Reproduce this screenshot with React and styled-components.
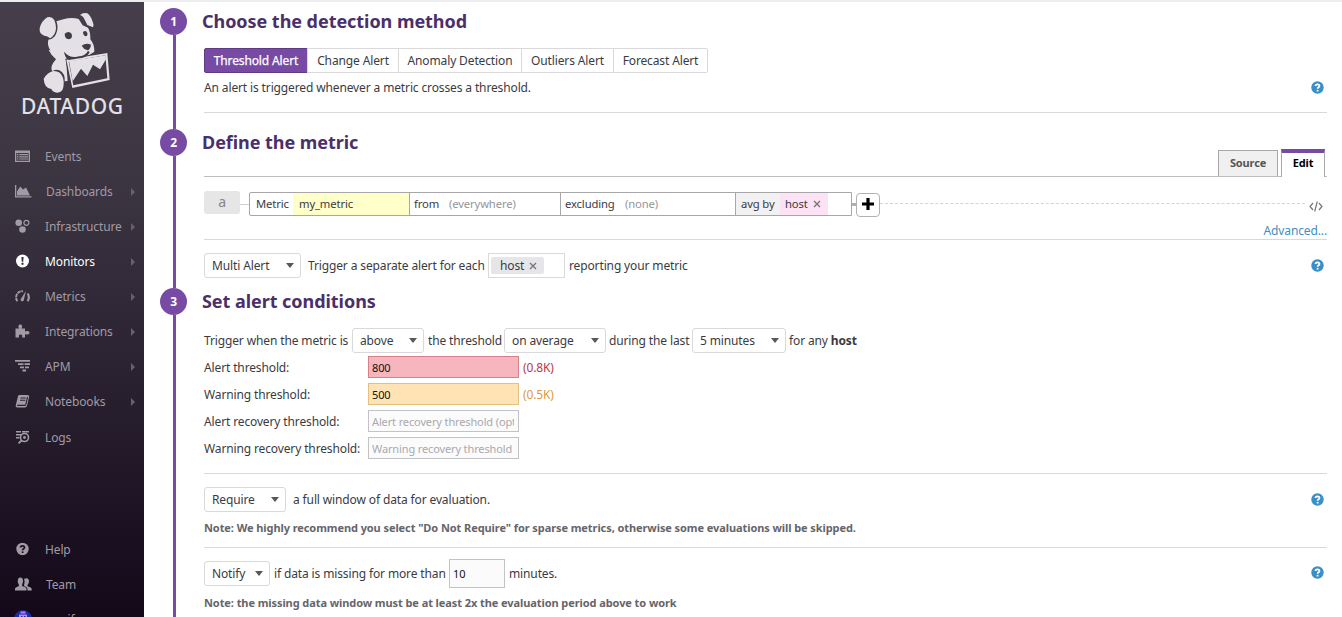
import React from "react";
import styled, { createGlobalStyle } from "styled-components";

const Global = createGlobalStyle`
  * { box-sizing: border-box; }
  body { margin: 0; background: #fff; }
  body, input, button { font-family: "Noto Sans", "Open Sans", sans-serif; font-size: 12px; color: #3b3b3f; letter-spacing: -0.13px; }
`;

const Page = styled.div`
  display: flex;
  height: 617px;
  overflow: hidden;
  border-top: 2px solid #b4b4b6;
  border-image: linear-gradient(#eeeef0 50%, #a9a8ab 50%) 2;
  border-left: 0; border-right: 0; border-bottom: 0;
`;

/* ---------- sidebar ---------- */
const Sidebar = styled.nav`
  flex: none;
  width: 144px;
  height: 615px;
  background: linear-gradient(#463f4b 0%, #3b3441 30%, #2a2231 60%, #1c1122 85%, #140919 100%);
`;
const Brand = styled.div`
  height: 137px;
  padding: 8px 0 0 21px;
  svg { display: block; margin-left: 14px; }
`;
const Wordmark = styled.div`
  margin-top: -4px;
  font: 500 21px/28px "Noto Sans", sans-serif;
  color: #e3e0e6;
  letter-spacing: 0.6px;
  white-space: nowrap;
`;
const NavItem = styled.a`
  display: flex;
  align-items: center;
  height: 35px;
  margin-top: ${(p) => p.$gap || 0}px;
  padding: 0 9px 0 14px;
  color: ${(p) => (p.$active ? "#fff" : "#a09ba5")};
  svg { flex: none; display: block; margin-bottom: 1px; }
`;
const NavLabel = styled.span`
  flex: 1;
  margin-left: 14px;
  white-space: nowrap;
`;
const Chevron = styled.i`
  border: 4px solid transparent;
  border-left-color: #68616d;
  border-right: 0;
`;

/* ---------- main column ---------- */
const Main = styled.main`
  flex: 1;
  padding: 6px 15px 0 16px;
`;
const Section = styled.section`
  display: flex;
  height: ${(p) => p.$h}px;
`;
const Rail = styled.div`
  flex: none;
  width: 27px;
  margin-right: 17px;
  display: flex;
  flex-direction: column;
  align-items: center;
  &::after { content: ""; flex: 1; width: 3px; margin-left: 2px; background: #774aa4; }
`;
const Step = styled.div`
  width: 27px;
  height: 27px;
  border-radius: 50%;
  background: #774aa4;
  color: #fff;
  font-weight: 700;
  line-height: 27px;
  text-align: center;
`;
const Body = styled.div`
  flex: 1;
  min-width: 0;
`;
const Heading = styled.h2`
  margin: 0 0 0 -2px;
  font-size: 18px;
  line-height: 26px;
  height: 27px;
  font-weight: 700;
  color: #4a2f6b;
  letter-spacing: -0.05px;
  white-space: nowrap;
`;
const Row = styled.div`
  display: flex;
  align-items: center;
  height: ${(p) => p.$h}px;
  margin-top: ${(p) => p.$top || 0}px;
`;
const Rule = styled.hr`
  height: 1px;
  border: 0;
  background: #d9d9dc;
  margin: ${(p) => p.$top}px 0 0;
`;
const Text = styled.span`
  flex: none;
  width: ${(p) => (p.$w ? p.$w + "px" : "auto")};
  white-space: nowrap;
  color: ${(p) => p.$color || "inherit"};
`;
const Note = styled.p`
  margin: ${(p) => p.$top}px 0 0;
  font-size: 11px;
  line-height: 16px;
  font-weight: 700;
  color: #65656a;
  letter-spacing: -0.08px;
  white-space: nowrap;
`;
const HelpDot = styled.span`
  flex: none;
  margin: ${(p) => p.$m || "0 3px 0 auto"};
  color: #3a8fc6;
  svg { display: block; }
`;

const Methods = styled.div`
  display: flex;
  height: 25px;
  margin-top: 13px;
`;
const Method = styled.button`
  width: ${(p) => p.$w}px;
  height: 25px;
  padding: 0;
  margin-left: ${(p) => (p.$on ? 0 : -1)}px;
  border: 1px solid ${(p) => (p.$on ? "#5f3a87" : "#d9d9dc")};
  background: ${(p) => (p.$on ? "#774aa4" : "#fff")};
  color: ${(p) => (p.$on ? "#fff" : "#3b3b3f")};
  -webkit-text-stroke: ${(p) => (p.$on ? 0.25 : 0)}px #fff;
  white-space: nowrap;
  &:first-child { border-radius: 2px 0 0 2px; }
  &:last-child { border-radius: 0 2px 2px 0; }
`;

const HeadingBar = styled.div`
  display: flex;
  justify-content: space-between;
  height: 48px;
  border-bottom: 1px solid #bdbdc0;
`;
const Tabs = styled.div`
  display: flex;
  align-items: flex-end;
  gap: 3px;
  margin: 0 2px -1px 0;
`;
const Tab = styled.div`
  width: ${(p) => p.$w}px;
  height: ${(p) => (p.$on ? 28 : 27)}px;
  border: 1px solid #a8a8ab;
  border-top: ${(p) => (p.$on ? "4px solid #774aa4" : "1px solid #a8a8ab")};
  border-bottom: ${(p) => (p.$on ? "0" : "1px solid #bdbdc0")};
  background: ${(p) => (p.$on ? "#fff" : "#f0f0f1")};
  color: ${(p) => (p.$on ? "#000" : "#555")};
  font-size: 11px;
  font-weight: 700;
  line-height: ${(p) => (p.$on ? 20 : 24)}px;
  text-align: center;
`;

const QueryLetter = styled.div`
  width: 36px;
  height: 23px;
  margin-bottom: 3px;
  border-radius: 3px;
  background: #e6e6e7;
  color: #85858a;
  font-size: 14px;
  line-height: 21px;
  text-align: center;
`;
const Link = styled.i`
  width: ${(p) => p.$w}px;
  border-top: ${(p) => p.$t || 1}px solid ${(p) => p.$c || "#cfcfd2"};
`;
const Dashes = styled.i`
  flex: 1;
  border-top: 1px dashed #d4d4d6;
  margin: 0 4px 1px 0;
`;
const CodeIcon = styled.svg`
  width: 14px;
  height: 12px;
  margin: 3px 4px 0 0;
  fill: none;
  stroke: #77777b;
  stroke-width: 1.2;
`;
const Query = styled.div`
  display: flex;
  width: 603px;
  height: 24px;
  border: 1px solid #a7a7aa;
  border-radius: 2px 0 0 2px;
  font-size: 11.25px;
  line-height: 22px;
`;
const Cell = styled.div`
  flex: none;
  width: ${(p) => p.$w}px;
  padding-left: ${(p) => p.$p || 0}px;
  background: ${(p) => p.$bg || "transparent"};
  color: ${(p) => p.$color || "inherit"};
  border-right: ${(p) => (p.$edge ? "1px solid #a7a7aa" : "0")};
  white-space: nowrap;
`;
const Remove = styled.svg`
  width: 8px;
  height: 8px;
  margin-left: 5px;
  stroke: #77777b;
  stroke-width: 1.4;
`;
const AddButton = styled.button`
  display: grid;
  place-items: center;
  width: 24px;
  height: 24px;
  padding: 0 0 2px;
  margin-top: 2px;
  border: 1px solid #b2b2b5;
  border-radius: 4px;
  background: #fff;
`;
const Advanced = styled.a`
  display: block;
  height: 17px;
  margin-top: 5px;
  line-height: 17px;
  text-align: right;
  color: #3f8fc3;
`;

const SelectBox = styled.div`
  flex: none;
  display: flex;
  align-items: center;
  justify-content: space-between;
  width: ${(p) => p.$w}px;
  height: 25px;
  margin-right: ${(p) => p.$mr || 4}px;
  padding: 0 6px 0 7px;
  border: 1px solid #d9d9dc;
  border-radius: 3px;
  white-space: nowrap;
  &::after { content: ""; border: 4px solid transparent; border-top: 5px solid #58585c; border-bottom: 0; }
`;
const TagField = styled.div`
  width: 77px;
  height: 25px;
  margin-right: 4px;
  padding: 3px 2px;
  border: 1px solid #d9d9de;
`;
const Tag = styled.div`
  width: 53px;
  height: 17px;
  padding-left: 9px;
  border-radius: 2px;
  background: #e6e5e9;
  line-height: 17px;
  white-space: nowrap;
`;
const Field = styled.input`
  flex: none;
  width: ${(p) => p.$w || 151}px;
  height: ${(p) => p.$h || 22}px;
  margin: 0 4px 0 0;
  padding: 0 4px 0 3px;
  border: 1px solid ${(p) => p.$line || "#c3c3c7"};
  border-radius: 0;
  background: ${(p) => p.$bg || "#fbfbfc"};
  color: #111;
  font-size: 11px;
  outline: 0;
  &::placeholder { color: #a9a9ad; opacity: 1; }
`;
const FieldRows = styled.div`
  display: grid;
  grid-auto-rows: 22px;
  row-gap: 5px;
  margin-top: 3px;
`;

/* ---------- drawings ---------- */
const Icon = ({ children, w = 17, h = 16 }) => (
  <svg width={w} height={h} viewBox={`0 0 ${w} ${h}`} fill="currentColor">{children}</svg>
);
const QuestionMark = ({ size = 13, mark = "#fff" }) => (
  <svg width={size} height={size} viewBox="0 0 13 13">
    <circle cx="6.5" cy="6.5" r="6.2" fill="currentColor" />
    <path d="M4.5 5C4.5 2.8 8.5 2.8 8.5 5C8.5 6.3 6.6 6.3 6.6 7.8" fill="none" stroke={mark} strokeWidth="1.7" />
    <rect x="5.7" y="8.9" width="1.8" height="1.6" fill={mark} />
  </svg>
);
const Cross = () => (
  <Remove viewBox="0 0 8 8"><path d="M1 1L7 7M7 1L1 7" /></Remove>
);

const ICONS = {
  events: <Icon>
    <path fillRule="evenodd" d="M1 2.5h15v11.500h-15zM2.300 5v7.700h12.400v-7.700z" />
    <path d="M3 6h1.500v1.200H3zM5.200 6h9v1.200h-9zM3 8.200h1.500v1.200H3zM5.200 8.200h9v1.200h-9zM3 10.400h1.500v1.200H3zM5.200 10.400h9v1.200h-9z" />
  </Icon>,
  dashboards: <Icon w={18}><path d="M1 2h1.300v11.200H17.500v1.300H1zM3 12.500V8.500L6.200 3.500L9 6.500L12 4.500L16 12.500z" /></Icon>,
  infrastructure: <Icon>
    <circle cx="4.700" cy="4.800" r="3.300" /><circle cx="8.500" cy="11.500" r="3.300" />
    <circle cx="12.400" cy="4.800" r="2.500" fill="none" stroke="currentColor" strokeWidth="1.200" />
  </Icon>,
  monitors: <Icon><circle cx="8.500" cy="8" r="6.500" /><path fill="#32293a" d="M7.400 4h2.200l-.4 4.800h-1.400zM7.500 9.800h2v1.900h-2z" /></Icon>,
  metrics: <Icon>
    <path fill="none" stroke="currentColor" strokeWidth="1.900" strokeDasharray="3.600 .7" d="M3.300 13.300C.5 9 2.800 3 9 3.200" />
    <path fill="none" stroke="currentColor" strokeWidth="2.200" d="M13.600 5.500C15.300 8 15 11 13.700 13.300" />
    <path d="M12 2.800L9.800 12A1.600 1.600 0 1 1 7.200 10.500z" />
  </Icon>,
  integrations: <Icon><path d="M1.500 5.500H5.200C3.700 3.500 4.500 1.500 6.300 1.500S8.800 3.500 7.500 5.500H11V8.600C13 7.500 15.500 8 15.500 9.800S13 12 11 11V14.500H8C8.800 12.500 8 11.500 6.500 11.500S4.500 12.500 5.200 14.500H1.500z" /></Icon>,
  apm: <Icon><path d="M1 2h15v1.800H1zM4 5.200h5.500V7H4zM10.500 5.200H16V7h-5.500zM6 8.400h4v1.800H6zM11 8.400h4v1.800h-4zM8.500 11.600h3.500v1.800H8.500z" /></Icon>,
  notebooks: <Icon>
    <path d="M5.500 2H13.200Q15.500 2 15.200 3.800L13 12.800Q12.500 14.500 11 14.500H3.500Q1.300 14.500 1.800 12L4 3.200Q4.300 2 5.500 2z" />
    <path stroke="#2a2130" fill="none" strokeWidth="1.100" d="M6.500 5h5.300M6 7.200h5.300M3.200 12.400H10.800Q11.600 12.400 11.800 11.600L13.600 4" />
  </Icon>,
  logs: <Icon>
    <path d="M2 2h5v1.500H2zM8 2h7v1.500H8zM2 5h5v1.500H2zM2 8h3.500v1.500H2z" />
    <circle cx="10.500" cy="8.500" r="4" fill="none" stroke="currentColor" strokeWidth="1.600" /><circle cx="10.500" cy="8.500" r="1.400" />
    <path stroke="currentColor" strokeWidth="1.800" d="M7.500 11.500L4.500 14.300" />
  </Icon>,
  help: <Icon><g transform="translate(2 1.500)"><QuestionMark mark="#1c1122" /></g></Icon>,
  team: <Icon w={18}>
    <path d="M1 14.500V12.500Q1 11.500 4.500 10.300Q5.300 9.800 4.800 8.800Q3 6 4 3Q6 .5 8.500 2.500Q10 5 8.300 8.300Q7.700 9.700 8.500 10.300Q12.500 11.500 12.500 12.500V14.500z" />
    <path d="M10 3Q14 1 15 4.500Q15.200 7 13.700 8.800Q13 10 14 10.500Q17.500 11.500 17.700 12.700V14.500H13.500V12.500Q13.300 11.300 10.400 10.200Q9.500 9.500 10.300 8Q11.300 5 10 3z" />
  </Icon>,
  account: <Icon w={18} h={18}>
    <circle cx="9" cy="9" r="9" fill="#1b2aa5" />
    <path fill="#b388f5" d="M6.500 1.500h5v2h-5zM5 4.500h8v9H5z" /><path fill="#1b2aa5" d="M7 6h1.500v2H7zM10 6h1.500v2H10z" />
  </Icon>,
};

const DogLogo = () => (
  <svg width="80" height="86" viewBox="105 30 240 258" fill="#e3e0e6">
    <path d="M142 52Q155 48 163 60Q173 85 163 103Q157 112 150 115Q143 108 133 107Q117 103 119 85Q124 63 142 52z" />
    <path d="M169 64L190 58Q215 50 236 57L248 76L264 83Q272 97 271 118Q284 134 283 155L262 169Q239 183 212 173Q200 169 194 159Q197 176 207 181L199 190L203 243L194 244Q196 220 178 211Q167 207 157 214Q148 200 168 178Q154 167 146 150L151 151Q141 136 145 119Q165 118 171 94Q175 77 169 64z" />
    <path d="M240 45Q249 36 262 40Q273 48 279 68Q283 77 279 82L262 75L251 53Q247 47 240 45z" />
    <path d="M131 236Q143 217 160 213Q181 212 188 231Q193 243 190 262Q187 278 171 278Q158 277 154 267Q133 265 131 236z" />
    <path fill="#423b47" d="M196 176L325 156L332 243L214 267z" />
    <path fillRule="evenodd" d="M199 179L322 159L329 240L217 264zM206 185L220 256L322 235L316 166z" />
    <path d="M207 184L317 166L318 178L300 208L279 194L262 228L243 206L218 244z" />
    <g fill="#423b47">
      <path d="M194 101Q207 90 215 102Q219 116 206 118Q194 116 194 101zM249 96Q258 89 262 99Q264 108 257 109Q249 106 249 96zM245 137Q258 128 273 134Q271 148 263 151Q251 148 245 137z" />
      <path d="M192 155Q208 174 231 170Q257 169 264 152L269 157Q261 174 238 175L206 180Q194 170 192 155z" />
    </g>
  </svg>
);

const NAV = [
  ["events", "Events", 0], ["dashboards", "Dashboards", 1], ["infrastructure", "Infrastructure", 1],
  ["monitors", "Monitors", 1], ["metrics", "Metrics", 1], ["integrations", "Integrations", 1],
  ["apm", "APM", 1], ["notebooks", "Notebooks", 1], ["logs", "Logs", 0, 1],
  ["help", "Help", 0, 77], ["team", "Team", 0], ["account", "wasif", 0],
];

const METHODS = [["Threshold Alert", 104], ["Change Alert", 92], ["Anomaly Detection", 124], ["Outliers Alert", 93], ["Forecast Alert", 95]];

export default function App() {
  return (
    <>
      <Global />
      <Page>
        <Sidebar>
          <Brand><DogLogo /><Wordmark>DATADOG</Wordmark></Brand>
          {NAV.map(([id, label, more, gap]) => (
            <NavItem key={id} $gap={gap} $active={id === "monitors"}>
              {ICONS[id]}<NavLabel>{label}</NavLabel>{more ? <Chevron /> : null}
            </NavItem>
          ))}
        </Sidebar>
        <Main>
          <Section $h={121}>
            <Rail><Step>1</Step></Rail>
            <Body>
              <Heading>Choose the detection method</Heading>
              <Methods>
                {METHODS.map(([label, w], i) => <Method key={label} $w={w} $on={i === 0}>{label}</Method>)}
              </Methods>
              <Row $h={29}><Text>An alert is triggered whenever a metric crosses a threshold.</Text><HelpDot><QuestionMark /></HelpDot></Row>
              <Rule $top={10} />
            </Body>
          </Section>

          <Section $h={159}>
            <Rail><Step>2</Step></Rail>
            <Body>
              <HeadingBar>
                <Heading>Define the metric</Heading>
                <Tabs><Tab $w={60}>Source</Tab><Tab $w={44} $on>Edit</Tab></Tabs>
              </HeadingBar>
              <Row $h={26} $top={14}>
                <QueryLetter>a</QueryLetter>
                <Link $w={9} />
                <Query>
                  <Cell $w={43} $p={6}>Metric</Cell>
                  <Cell $w={117} $p={6} $bg="#feffc9" $edge>my_metric</Cell>
                  <Cell $w={34} $p={4}>from</Cell>
                  <Cell $w={117} $p={5} $color="#96969a" $edge>(everywhere)</Cell>
                  <Cell $w={59} $p={4}>excluding</Cell>
                  <Cell $w={116} $p={5} $color="#96969a" $edge>(none)</Cell>
                  <Cell $w={44} $p={5} $bg="#f1f1f2">avg by</Cell>
                  <Cell $w={48} $p={5} $bg="#fde1f5">host<Cross /></Cell>
                </Query>
                <Link $w={4} $t={3} $c="#b0b0b3" />
                <AddButton><svg width="12" height="12" viewBox="0 0 12 12"><path d="M6 0V12M0 6H12" stroke="#000" strokeWidth="3.200" /></svg></AddButton>
                <Dashes />
                <CodeIcon viewBox="0 0 14 12"><path d="M4 3L1 6.500L4 10M10 3L13 6.500L10 10M8.300 1.500L5.700 11.500" /></CodeIcon>
              </Row>
              <Advanced>Advanced...</Advanced>
              <Rule $top={0} />
              <Row $h={25} $top={13}>
                <SelectBox $w={97} $mr={7}>Multi Alert</SelectBox>
                <Text $w={180}>Trigger a separate alert for each</Text>
                <TagField><Tag>host<Cross /></Tag></TagField>
                <Text>reporting your metric</Text>
                <HelpDot><QuestionMark /></HelpDot>
              </Row>
            </Body>
          </Section>

          <Section $h={340}>
            <Rail><Step>3</Step></Rail>
            <Body>
              <Heading>Set alert conditions</Heading>
              <Row $h={25} $top={13}>
                <Text $w={148}>Trigger when the metric is</Text>
                <SelectBox $w={72}>above</SelectBox>
                <Text $w={76}>the threshold</Text>
                <SelectBox $w={102} $mr={3}>on average</SelectBox>
                <Text $w={83}>during the last</Text>
                <SelectBox $w={94} $mr={3}>5 minutes</SelectBox>
                <Text>for any <b>host</b></Text>
              </Row>
              <FieldRows>
                <Row $h={22}><Text $w={164}>Alert threshold:</Text><Field $bg="#f7b6be" $line="#d97f8c" defaultValue="800" /><Text $color="#b8394b">(0.8K)</Text></Row>
                <Row $h={22}><Text $w={164}>Warning threshold:</Text><Field $bg="#ffe3b5" $line="#e2c07f" defaultValue="500" /><Text $color="#dc9a45">(0.5K)</Text></Row>
                <Row $h={22}><Text $w={164}>Alert recovery threshold:</Text><Field placeholder="Alert recovery threshold (optional)" /></Row>
                <Row $h={22}><Text $w={164}>Warning recovery threshold:</Text><Field placeholder="Warning recovery threshold (optional)" /></Row>
              </FieldRows>
              <Rule $top={14} />
              <Row $h={25} $top={13}>
                <SelectBox $w={82} $mr={7}>Require</SelectBox>
                <Text>a full window of data for evaluation.</Text>
                <HelpDot><QuestionMark /></HelpDot>
              </Row>
              <Note $top={8}>Note: We highly recommend you select "Do Not Require" for sparse metrics, otherwise some evaluations will be skipped.</Note>
              <Rule $top={11} />
              <Row $h={29} $top={11}>
                <SelectBox $w={66}>Notify</SelectBox>
                <Text $w={175}>if data is missing for more than</Text>
                <Field $w={56} $h={29} defaultValue="10" />
                <Text>minutes.</Text>
                <HelpDot $m="-2px 3px 0 auto"><QuestionMark /></HelpDot>
              </Row>
              <Note $top={7}>Note: the missing data window must be at least 2x the evaluation period above to work</Note>
            </Body>
          </Section>
        </Main>
      </Page>
    </>
  );
}
